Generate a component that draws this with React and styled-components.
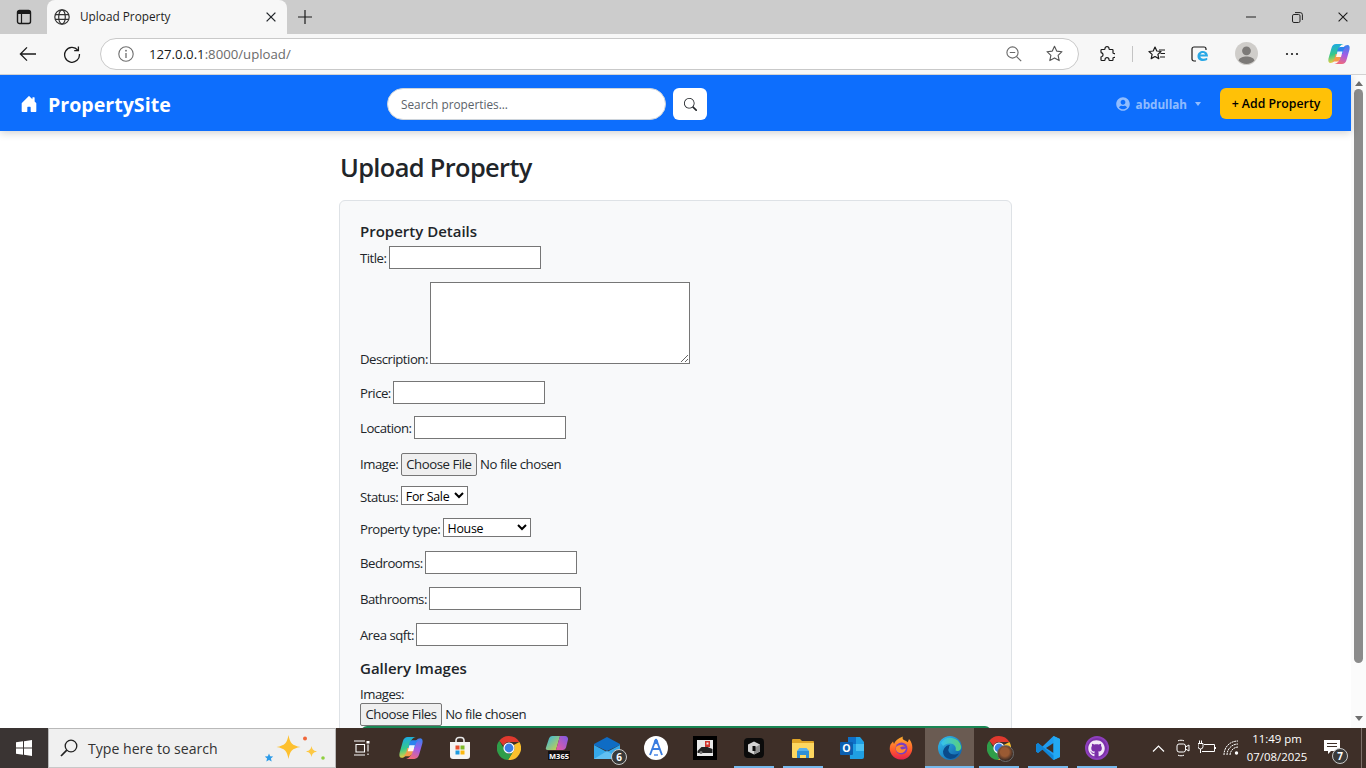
import React from "react";
import styled, { createGlobalStyle } from "styled-components";
import { FaUserCircle, FaGithub } from "react-icons/fa";
import { BsSearch, BsHouseDoorFill } from "react-icons/bs";

const UI = `"Open Sans", "Noto Sans", "Liberation Sans", sans-serif`;

const Global = createGlobalStyle`
  html, body { margin: 0; padding: 0; height: 768px; overflow: hidden; background: #fff; }
  * { box-sizing: border-box; }
  body { font-family: ${UI}; font-size: 13.2px; line-height: 21px; color: #212529; }
`;

const Screen = styled.div`
  width: 1366px;
  height: 768px;
  display: flex;
  flex-direction: column;
  overflow: hidden;
`;

/* browser chrome */
const TabStrip = styled.div`
  height: 34px;
  background: #cccccc;
  display: flex;
  align-items: flex-end;
  flex: none;
`;
const StripSlot = styled.div`
  width: ${(p) => p.$w}px;
  height: 34px;
  display: flex;
  align-items: center;
  justify-content: center;
  flex: none;
  color: #1a1a1a;
`;
const Tab = styled.div`
  width: 240px;
  height: 34px;
  background: #f7f7f7;
  border-radius: 8px 8px 0 0;
  display: flex;
  align-items: center;
  padding: 0 11px 0 7px;
  flex: none;
`;
const TabTitle = styled.span`
  flex: 1;
  margin: 0 0 2px 10px;
  font-size: 11.8px;
  color: #1f1f1f;
`;
const WindowControls = styled.div`
  margin-left: auto;
  display: flex;
  height: 34px;
`;
const Toolbar = styled.div`
  height: 41px;
  background: #f7f7f7;
  border-bottom: 1px solid #d2d2d2;
  display: flex;
  align-items: center;
  padding: 0 0 1px 10px;
  flex: none;
`;
const ToolSlot = styled.div`
  width: 36px;
  height: 32px;
  display: flex;
  align-items: center;
  justify-content: center;
  flex: none;
  margin-left: ${(p) => p.$gap || 0}px;
  color: #1a1a1a;
`;
const UrlBar = styled.div`
  width: 979px;
  height: 32px;
  margin-left: 10px;
  background: #fff;
  border: 1px solid #c9c9c9;
  border-radius: 16px;
  display: flex;
  align-items: center;
  padding: 0 15px 0 17px;
  flex: none;
`;
const UrlText = styled.span`
  margin: 2px 0 0 15px;
  font-size: 13.2px;
  color: #1a1a1a;
  flex: 1;
`;
const UrlRest = styled.span`
  color: #6b6b6b;
`;
const UrlIcons = styled.div`
  display: flex;
  align-items: center;
  gap: 24px;
`;
const ToolDivider = styled.div`
  width: 1px;
  height: 16px;
  background: #c4c4c4;
  margin-left: 7px;
  flex: none;
`;

/* page */
const Main = styled.div`
  flex: 1;
  min-height: 0;
  display: flex;
  overflow: hidden;
`;
const Page = styled.div`
  flex: 1;
  min-width: 0;
  background: #fff;
`;
const Navbar = styled.nav`
  height: 56px;
  background: #0d6efd;
  display: flex;
  align-items: center;
  padding: 2px 19px 0 20px;
  box-shadow: 0 2px 8px rgba(0, 0, 0, 0.18);
  position: relative;
`;
const Brand = styled.div`
  width: 367px;
  display: flex;
  align-items: center;
  gap: 10px;
  color: #fff;
  font-size: 19.6px;
  font-weight: 700;
  flex: none;
`;
const SearchInput = styled.div`
  width: 279px;
  height: 32px;
  background: #fff;
  border: 1px solid #ced4da;
  border-radius: 16px;
  display: flex;
  align-items: center;
  padding: 0 13px;
  font-size: 11.8px;
  color: #5c636a;
  flex: none;
`;
const SearchButton = styled.div`
  width: 34px;
  height: 32px;
  margin-left: 7px;
  background: #fff;
  border-radius: 6px;
  display: flex;
  align-items: center;
  justify-content: center;
  color: #212529;
  flex: none;
`;
const UserMenu = styled.div`
  margin-left: auto;
  display: flex;
  align-items: center;
  color: rgba(255, 255, 255, 0.55);
  font-size: 11.7px;
  font-weight: 700;
  gap: 6px;
`;
const Caret = styled.span`
  width: 0;
  height: 0;
  margin-left: 2px;
  border-top: 4px solid currentColor;
  border-left: 3px solid transparent;
  border-right: 3px solid transparent;
`;
const AddButton = styled.div`
  margin-left: 19px;
  width: 112px;
  height: 31px;
  background: #ffc107;
  border-radius: 6px;
  display: flex;
  align-items: center;
  justify-content: center;
  color: #000;
  font-size: 12.3px;
  font-weight: 600;
  margin-top: -1px;
`;
const Container = styled.div`
  width: 673px;
  margin-left: 339px;
`;
const Title = styled.h1`
  margin: 15px 0 12px 1px;
  font-size: 25.4px;
  line-height: 42px;
  font-weight: 600;
  letter-spacing: -0.65px;
  color: #212529;
`;
const Card = styled.div`
  background: #f8f9fa;
  border: 1px solid #dee2e6;
  border-radius: 6px;
  padding: 18px 20px 0;
  height: 600px;
  letter-spacing: -0.5px;
`;
const SectionTitle = styled.h2`
  margin: 0 0 ${(p) => p.$bottom}px;
  font-size: 15px;
  line-height: 24px;
  font-weight: 600;
  letter-spacing: 0;
  color: #212529;
`;
const Field = styled.div`
  margin-top: ${(p) => p.$before || 0}px;
  margin-bottom: ${(p) => p.$after}px;
  white-space: nowrap;
`;
const Label = styled.label`
  margin-right: 2.5px;
  color: #212529;
`;
const TextInput = styled.input`
  width: 152px;
  height: 23px;
  border: 1px solid #767676;
  border-radius: 0;
  background: #fff;
  padding: 1px 2px;
  vertical-align: 1px;
`;
const TextArea = styled.textarea`
  width: 260px;
  height: 82px;
  border: 1px solid #767676;
  border-radius: 0;
  background: #fff;
  vertical-align: baseline;
  margin: 0;
`;
const FileInput = styled.input`
  font: inherit;
  font-size: 13.2px;
  letter-spacing: -0.45px;
  color: #212529;
  width: 190px;
  &::file-selector-button {
    font: inherit;
    letter-spacing: -0.45px;
    height: 23px;
    padding: 0 4.5px;
    margin-right: 3px;
    border: 1px solid #767676;
    border-radius: 2px;
    background: #efefef;
    color: #212529;
  }
`;
const Select = styled.select`
  font: inherit;
  font-size: 12.4px;
  letter-spacing: -0.3px;
  height: 19px;
  width: ${(p) => p.$w}px;
  background: #fff;
  color: #000;
  border: 1px solid #767676;
  border-radius: 0;
  padding: 0;
  vertical-align: 1px;
`;
const SubmitPeek = styled.div`
  height: 30px;
  width: 630px;
  margin-left: 1px;
  background: #198754;
  border-radius: 6px;
`;
const Scrollbar = styled.div`
  width: 15px;
  background: #fbfbfb;
  display: flex;
  flex-direction: column;
  align-items: center;
  justify-content: space-between;
  padding: 6px 0 7px;
  flex: none;
`;
const Thumb = styled.div`
  width: 9px;
  height: 574px;
  margin-top: 3px;
  background: #8b8b8b;
  border-radius: 5px;
`;
const ArrowUp = styled.span`
  border-bottom: 5px solid #6e6e6e;
  border-left: 4.5px solid transparent;
  border-right: 4.5px solid transparent;
`;
const ArrowDown = styled.span`
  margin-top: auto;
  border-top: 5px solid #6e6e6e;
  border-left: 4.5px solid transparent;
  border-right: 4.5px solid transparent;
`;

/* windows taskbar */
const Taskbar = styled.div`
  height: 40px;
  background: #3e2f28;
  display: flex;
  flex: none;
  position: relative;
  color: #fff;
`;
const StartButton = styled.div`
  width: 48px;
  background: #3a3433;
  display: flex;
  align-items: center;
  justify-content: center;
  flex: none;
`;
const SearchBox = styled.div`
  width: 288px;
  background: #f0f0f0;
  border: 1px solid #b9b9b9;
  border-bottom-color: #c8c8c8;
  display: flex;
  align-items: center;
  padding: 0 8px 0 11px;
  color: #2b2b2b;
  flex: none;
`;
const SearchLabel = styled.span`
  margin-left: 10px;
  font-size: 14.1px;
  flex: 1;
  color: #333;
`;
const TaskItems = styled.div`
  display: flex;
  padding-left: 1px;
  flex: none;
`;
const TaskItem = styled.div`
  width: 49px;
  height: 40px;
  display: flex;
  align-items: center;
  justify-content: center;
  position: relative;
  flex: none;
  background: ${(p) => (p.$active ? "#6a5b52" : "transparent")};
  &::after {
    content: "";
    display: ${(p) => (p.$running ? "block" : "none")};
    position: absolute;
    bottom: 0;
    left: ${(p) => (p.$active ? 0 : 5)}px;
    right: ${(p) => (p.$active ? 0 : 4)}px;
    height: 2px;
    background: #76b9ed;
  }
`;
const CountBadge = styled.span`
  position: absolute;
  right: ${(p) => p.$right}px;
  bottom: ${(p) => p.$bottom}px;
  width: 16px;
  height: 16px;
  border-radius: 50%;
  border: 1px solid #c9c9c9;
  background: #3a3a3a;
  color: #fff;
  font-size: 10px;
  font-weight: 700;
  line-height: 14px;
  text-align: center;
`;
const Tray = styled.div`
  margin-left: auto;
  display: flex;
  align-items: center;
  flex: none;
`;
const TraySlot = styled.div`
  width: 24.5px;
  height: 40px;
  display: flex;
  align-items: center;
  justify-content: center;
`;
const Clock = styled.div`
  width: 66px;
  text-align: center;
  font-size: 11.4px;
  line-height: 18px;
  color: #fff;
`;
const Notify = styled.div`
  width: 44px;
  height: 40px;
  margin-left: 1px;
  display: flex;
  align-items: center;
  justify-content: center;
  position: relative;
`;
const ShowDesktop = styled.div`
  width: 5px;
  height: 40px;
  margin-left: 6px;
  border-left: 1px solid #7d706a;
`;
const Tiny = styled.text`
  font-family: ${UI};
`;

/* icons */
const Svg = ({ s = 16, vb = "0 0 16 16", children }) => (
  <svg width={s} height={s} viewBox={vb} fill="none" stroke="none">{children}</svg>
);
const line = { stroke: "currentColor", strokeWidth: 1.2, fill: "none" };

const SidebarIcon = () => (
  <Svg><rect x="1.5" y="1.5" width="13" height="13" rx="2" {...line} strokeWidth="1.4" /><path d="M5.5 5v9" {...line} /><path d="M2 2h12v3H2z" fill="#1a1a1a" /></Svg>
);
const GlobeIcon = () => (
  <Svg><g {...line} stroke="#333"><circle cx="8" cy="8" r="7.2" /><ellipse cx="8" cy="8" rx="3.3" ry="7.2" /><path d="M1 5.6h14M1 10.4h14" /></g></Svg>
);
const CloseIcon = ({ s = 10, w = 1.3 }) => (
  <Svg s={s} vb="0 0 10 10"><path d="M.6.6l8.8 8.8M9.4.6L.6 9.4" stroke="currentColor" strokeWidth={w} /></Svg>
);
const PlusIcon = () => (
  <Svg><path d="M8 1v14M1 8h14" stroke="currentColor" strokeWidth="1.2" /></Svg>
);
const MinIcon = () => <Svg s={10} vb="0 0 10 10"><path d="M0 5h10" stroke="#222" strokeWidth="1" /></Svg>;
const RestoreIcon = () => (
  <Svg s={11} vb="0 0 11 11"><rect x=".5" y="2.5" width="7.5" height="8" rx="1.4" stroke="#222" /><path d="M3 .6h5.2a2.2 2.2 0 012.2 2.2V8" stroke="#222" /></Svg>
);
const BackIcon = () => (
  <Svg s={18} vb="0 0 18 18"><path d="M17 9H1.5M8 2.4L1.4 9 8 15.6" stroke="#1a1a1a" strokeWidth="1.3" /></Svg>
);
const ReloadIcon = () => (
  <Svg s={18} vb="0 0 18 18"><path d="M14.8 5.2A7.4 7.4 0 1016.4 9" stroke="#1a1a1a" strokeWidth="1.3" /><path d="M15.4 1.4v4.2h-4.2" stroke="#1a1a1a" strokeWidth="1.3" /></Svg>
);
const InfoIcon = () => (
  <Svg><circle cx="8" cy="8" r="7.2" stroke="#6e6e6e" strokeWidth="1.1" /><path d="M8 7v5" stroke="#6e6e6e" strokeWidth="1.3" /><circle cx="8" cy="4.7" r=".9" fill="#6e6e6e" /></Svg>
);
const ZoomOutIcon = () => (
  <Svg><circle cx="6.5" cy="6.5" r="5.6" stroke="#6a6a6a" strokeWidth="1.1" /><path d="M3.8 6.5h5.4M10.6 10.6L15.2 15.2" stroke="#6a6a6a" strokeWidth="1.2" /></Svg>
);
const StarIcon = () => (
  <Svg s={17} vb="0 0 17 17"><path d="M8.5 1.2l2.2 4.9 5.3.6-3.9 3.6 1.1 5.3-4.7-2.7-4.7 2.7 1.1-5.3L1 6.7l5.3-.6z" stroke="#555" strokeWidth="1.1" strokeLinejoin="round" /></Svg>
);
const PuzzleIcon = () => (
  <Svg s={16} vb="0 0 16 16"><path d="M6 2.600a2 2 0 014 0c0 .5.3.9.8.9h2.400c.5 0 .8.4.8.8v2.400c0 .5.4.8.9.8a2 2 0 010 4c-.5 0-.9.3-.9.8v1.400c0 .5-.3.8-.8.8h-2.400c-.5 0-.8-.3-.8-.8a2 2 0 00-4 0c0 .5-.3.8-.8.8H2.800c-.5 0-.8-.3-.8-.8v-2.400c0-.5.4-.8.9-.8a2 2 0 000-3.600c-.5 0-.9-.3-.9-.8V4.300c0-.4.3-.8.8-.8h2.400c.5 0 .8-.4.8-.9z" stroke="#1a1a1a" strokeWidth="1.2" /></Svg>
);
const FavIcon = () => (
  <Svg s={18} vb="0 0 18 18"><path d="M7 2l1.800 4 4.200.5-3.100 2.900.9 4.200L7 11.500l-3.800 2.100.9-4.200L1 6.500 5.200 6z" stroke="#1a1a1a" strokeWidth="1.2" strokeLinejoin="round" /><path d="M11 5h6M12.500 8.500H17M12 12h5" stroke="#1a1a1a" strokeWidth="1.1" /></Svg>
);
const IeIcon = () => (
  <Svg s={18} vb="0 0 18 18">
    <path d="M5 16H3a2 2 0 01-2-2V4a2 2 0 012-2h10a2 2 0 012 2v1" stroke="#1a1a1a" strokeWidth="1.2" />
    <path d="M17 11.500H9.300c.2 2 2.900 3 6.900 1.200v2.400c-4.700 2-9.700.9-9.700-3.800 0-4.500 5.200-6.500 8.400-4.300 1.500 1 2 2.600 2.100 4.500zM9.400 9.500h4.700c-.2-2-4.300-2.200-4.700 0z" fill="#29a8e6" />
  </Svg>
);
const ProfileIcon = () => (
  <Svg s={23} vb="0 0 23 23">
    <circle cx="11.500" cy="11.500" r="11.500" fill="#cfcdca" />
    <circle cx="11.500" cy="8.800" r="4.400" fill="#7c7a78" />
    <path d="M3.500 18.500c1-3 4.500-4 8-4s7 1 8 4a11 11 0 01-16 0z" fill="#7c7a78" />
  </Svg>
);
const DotsIcon = () => (
  <Svg s={14} vb="0 0 14 14"><g fill="#1a1a1a"><circle cx="2" cy="7" r="1.100" /><circle cx="7" cy="7" r="1.100" /><circle cx="12" cy="7" r="1.100" /></g></Svg>
);
const CopilotIcon = ({ id, s = 22 }) => (
  <svg width={s} height={s} viewBox="0 0 22 22">
    <defs>
      <linearGradient id={`${id}a`} x1="0.2" y1="0" x2="0.4" y2="1"><stop offset="0" stopColor="#1aa7ec" /><stop offset=".55" stopColor="#35c98a" /><stop offset="1" stopColor="#f7cf3a" /></linearGradient>
      <linearGradient id={`${id}b`} x1="0.7" y1="0" x2="0.4" y2="1"><stop offset="0" stopColor="#3f7ff0" /><stop offset=".5" stopColor="#a35ce6" /><stop offset="1" stopColor="#f26a7a" /></linearGradient>
    </defs>
    <path d="M8 1h7.500c-3 .5-4.500 3-5.500 6.500L8 14c-.7 3-2.500 6-5.500 6C.5 20 0 18 .5 15.500L3.500 5C4.200 2.600 5.800 1 8 1z" fill={`url(#${id}a)`} />
    <path d="M14 21H6.500c3-.5 4.500-3 5.500-6.500L14 8c.7-3 2.500-6 5.500-6 2 0 2.500 2 2 4.500L18.500 17c-.7 2.400-2.300 4-4.500 4z" fill={`url(#${id}b)`} />
    <path d="M12 4h6c-1.500 1-2.500 2.500-3 4.500l-.6 2.500H8.500l1-4C10 5 11 4 12 4z" fill="#2a83ee" />
    <path d="M7.600 11h5.900l-1 3.500C12 17 10.800 18 9.500 18.500H4c1.500-1 2.600-2.500 3-4.500z" fill="#f59a4a" />
    <path d="M9.500 8.500h5l-1.500 5.500h-5z" fill="#fff" opacity=".92" />
  </svg>
);
const WinLogo = () => (
  <Svg s={16} vb="0 0 16 16"><path d="M0 2.300l7-1v6.200H0zM8 1.200L16 0v7.500H8zM0 8.500h7v6.200l-7-1zM8 8.500h8V16l-8-1.200z" fill="#fff" /></Svg>
);
const LoupeIcon = () => (
  <Svg s={18} vb="0 0 18 18"><circle cx="11" cy="7" r="5.800" stroke="#222" strokeWidth="1.300" /><path d="M6.800 11.200L1 17" stroke="#222" strokeWidth="1.700" /></Svg>
);
const Sparkles = () => (
  <svg width="62" height="30" viewBox="0 0 62 30">
    <path d="M23.500 2c1.500 8 3.500 10.500 12 12-8.500 1.500-10.500 4-12 12-1.500-8-3.500-10.500-12-12 8.500-1.500 10.500-4 12-12z" fill="#fdc02f" />
    <path d="M46.500 13c.6 3 1.500 4.500 5.500 5.500-4 1-4.900 2.500-5.500 5.500-.6-3-1.500-4.500-5.500-5.500 4-1 4.900-2.500 5.500-5.500z" fill="#fdc844" />
    <path d="M4 20.500l1.200 2.800 3 .3-2.300 2 .8 3L4 27l-2.700 1.600.8-3-2.300-2 3-.3z" fill="#2d9be8" />
    <circle cx="40" cy="5.500" r="2" fill="#f0673a" />
    <circle cx="58" cy="25" r="1.800" fill="#8fcf3f" />
  </svg>
);
const TaskViewIcon = () => (
  <Svg s={16} vb="0 0 16 16"><path d="M2 4.500h8.500v7.500H2zM0 1h11M0 15h11M14 4.500v7M14 13.500V15" stroke="#fff" strokeWidth="1.100" /><rect x="12.500" y="1" width="3" height="2.500" fill="#fff" /></Svg>
);
const StoreIcon = () => (
  <Svg s={24} vb="0 0 24 24">
    <path d="M8 6V4.500a3 3 0 013-3h2a3 3 0 013 3V6" stroke="#e8e8e8" strokeWidth="1.600" />
    <path d="M2 6h20v14a3 3 0 01-3 3H5a3 3 0 01-3-3z" fill="#f4f4f4" />
    <rect x="7.500" y="9.500" width="4" height="4" fill="#e8502f" /><rect x="12.500" y="9.500" width="4" height="4" fill="#7fba28" />
    <rect x="7.500" y="14.500" width="4" height="4" fill="#1d9be0" /><rect x="12.500" y="14.500" width="4" height="4" fill="#fbb80f" />
  </Svg>
);
const ChromeIcon = ({ s = 24 }) => (
  <Svg s={s} vb="0 0 24 24">
    <path d="M12 0a12 12 0 0110.400 6H12a6 6 0 00-5.600 3.800L2.300 4.700A12 12 0 0112 0z" fill="#e0392e" />
    <path d="M22.400 6A12 12 0 0111 24l5.200-8.400A6 6 0 0016.800 9z" fill="#fbc02d" />
    <path d="M11 24A12 12 0 012.300 4.700L7 12.500a6 6 0 006 5.500l3.200-2.400z" fill="#2f9e49" />
    <circle cx="12" cy="12" r="5.600" fill="#fff" /><circle cx="12" cy="12" r="4.400" fill="#3a7ee8" />
  </Svg>
);
const ProfileChrome = styled.div`
  position: relative;
  width: 24px;
  height: 24px;
  &::after {
    content: "";
    position: absolute;
    right: -3px;
    bottom: -2px;
    width: 15px;
    height: 15px;
    border-radius: 50%;
    background: radial-gradient(circle at 45% 40%, #9a5a33 0 35%, #3a2a24 70%);
    border: 1px solid #6b6b6b;
  }
`;
const M365Icon = () => (
  <svg width="26" height="26" viewBox="0 0 26 26">
    <defs>
      <linearGradient id="m1" x1="0" y1="0" x2="1" y2="1"><stop offset="0" stopColor="#2fb5e6" /><stop offset="1" stopColor="#d8d23c" /></linearGradient>
      <linearGradient id="m2" x1="1" y1="0" x2="0" y2="1"><stop offset="0" stopColor="#7a5be8" /><stop offset="1" stopColor="#ec5a9c" /></linearGradient>
    </defs>
    <path d="M7 1h8l-4 14H2.500C1 15 .4 14 1 12.500L4 3.500A3.500 3.500 0 017 1z" fill="url(#m1)" />
    <path d="M15 1h5a3 3 0 013 3.500l-2 8A3.500 3.500 0 0118 15h-7z" fill="url(#m2)" />
    <rect x="3" y="16" width="22" height="9" fill="#111" />
    <Tiny x="14" y="23.500" fontSize="7.500" fontWeight="700" fill="#fff" textAnchor="middle">M365</Tiny>
  </svg>
);
const MailIcon = () => (
  <Svg s={26} vb="0 0 26 26">
    <path d="M0 9l13-7 13 7v1L13 16 0 10z" fill="#0f6cc4" />
    <path d="M0 10l13 7 13-7v14H0z" fill="#35a8ea" />
    <path d="M0 24l13-8 13 8z" fill="#61c0f2" />
  </Svg>
);
const StudioIcon = () => (
  <Svg s={24} vb="0 0 24 24">
    <circle cx="12" cy="12" r="12" fill="#fff" />
    <path d="M12 3L6 19M12 3l6 16M7.500 13h9" stroke="#3a7de0" strokeWidth="1.900" />
    <circle cx="12" cy="6" r="2.200" fill="#3a7de0" />
    <path d="M10 19h4" stroke="#7aa7ee" strokeWidth="2" />
  </Svg>
);
const GameIcon = () => (
  <Svg s={24} vb="0 0 24 24">
    <rect width="24" height="24" fill="#000" />
    <rect x="4" y="4" width="16" height="16" fill="#e9e9e9" />
    <path d="M4.500 15l4-4h6l5 2v4h-15z" fill="#222" />
    <path d="M12 5h5v6h-5z" fill="#d0342c" /><rect x="13.500" y="6.500" width="2" height="2" fill="#eee" />
    <circle cx="8" cy="16.500" r="1.500" fill="#777" />
  </Svg>
);
const CubeIcon = () => (
  <Svg s={20} vb="0 0 20 20">
    <rect width="20" height="20" rx="4" fill="#0b0b0b" />
    <path d="M10 3.500l6 3v7l-6 3-6-3v-7z" fill="#d4d4d4" />
    <path d="M10 10l6-3.500v7l-6 3z" fill="#8f8f8f" /><path d="M8.500 8h3v5h-3z" fill="#0b0b0b" />
  </Svg>
);
const FolderIcon = () => (
  <Svg s={22} vb="0 0 22 22">
    <path d="M0 3a1 1 0 011-1h7l2 2h11a1 1 0 011 1v3H0z" fill="#e0a526" />
    <path d="M0 6h22v14a1 1 0 01-1 1H1a1 1 0 01-1-1z" fill="#fdd760" />
    <path d="M5 14h12v7h-3v-3H8v3H5z" fill="#2f8fd6" />
    <path d="M7.500 11h7l2.500 3H5z" fill="#58b0ea" />
  </Svg>
);
const OutlookIcon = () => (
  <Svg s={24} vb="0 0 24 24">
    <path d="M9 1h11l4 5v15a2 2 0 01-2 2H10z" fill="#1f9fe3" />
    <path d="M8 1h8v7H8z" fill="#0f70c8" /><path d="M16 8h8v7h-8z" fill="#49c0f2" />
    <rect y="6" width="13" height="13" rx="1" fill="#0c5fb0" />
    <Tiny x="6.500" y="16" fontSize="10.500" fontWeight="700" fill="#fff" textAnchor="middle">O</Tiny>
  </Svg>
);
const FirefoxIcon = () => (
  <svg width="24" height="24" viewBox="0 0 24 24">
    <defs><linearGradient id="ff" x1="0" y1="0" x2="0" y2="1"><stop offset="0" stopColor="#ffb02e" /><stop offset=".6" stopColor="#ff5a2c" /><stop offset="1" stopColor="#e6204e" /></linearGradient></defs>
    <path d="M12 23.500A11 11 0 011.500 8.500L4 5.500 5 8c1-3 4-6 9-7.500-1 2 0 3 2 4 1 .5 2 1 2.800 1.800L20 3c2.800 3 3.500 6.500 3.300 9A11.200 11.200 0 0112 23.500z" fill="url(#ff)" />
    <circle cx="12.500" cy="12.500" r="6" fill="#7b3fbe" />
    <path d="M7 11c2-2.500 7-3 10 0-2-.8-5-.6-6 1 1 .3 1 1.500 2 1.500 2 0 3-1 4-1-.5 3-3 5-6 4.500-3-.5-4.800-3-4-6z" fill="#ff8a2e" />
  </svg>
);
const EdgeIcon = () => (
  <svg width="24" height="24" viewBox="0 0 24 24">
    <defs>
      <linearGradient id="eg" x1="0" y1="0" x2="1" y2="1"><stop offset="0" stopColor="#35c1f1" /><stop offset="1" stopColor="#0c59a4" /></linearGradient>
      <linearGradient id="eg2" x1="0" y1="0" x2="1" y2="0"><stop offset="0" stopColor="#35c1f1" /><stop offset="1" stopColor="#5ad07a" /></linearGradient>
    </defs>
    <circle cx="12" cy="12" r="12" fill="url(#eg)" />
    <path d="M3 7a11 11 0 0120 3c1 4-3 6-5.500 4.500C19 11 16 7.500 12 7.500 8 7.500 6 9 5 10 4.500 9 3.500 8 3 7z" fill="url(#eg2)" />
    <path d="M11 12c-2 3 1 7 6 6.500 2 0 3.500-1 4-2-1.500 5-7 7.500-11 6-3-1-5-3.500-5-7 1-4 4-7 7-6.500-1 1-1 2-1 3z" fill="#0a4a8a" />
  </svg>
);
const VsCodeIcon = () => (
  <Svg s={24} vb="0 0 24 24">
    <path d="M17.500 0L24 3v18l-6.500 3-11-10.500L2 17l-2-1.500v-7L2 7l4.500 3.500z" fill="#1f9cf0" />
    <path d="M17.500 7L10 12l7.500 5z" fill="#3e2f28" />
    <path d="M17.500 0L24 3v18l-6.500 3z" fill="#23a9f2" />
    <path d="M0 8.500L2 7l15.500 12.500V24L6.500 13.500 2 17l-2-1.500z" fill="#0d7fd0" opacity=".8" />
  </Svg>
);
const GithubBadge = styled.div`
  width: 24px;
  height: 24px;
  border-radius: 50%;
  background: #7b2fa8;
  border: 2px solid #8d3fbb;
  display: flex;
  align-items: center;
  justify-content: center;
  color: #f3e9f8;
`;
const Chevron = () => (
  <Svg s={13} vb="0 0 13 13"><path d="M1 9.500L6.500 4 12 9.500" stroke="#fff" strokeWidth="1.200" /></Svg>
);
const CamIcon = () => (
  <Svg s={18} vb="0 0 18 18"><rect x="3" y="5" width="8.500" height="8" rx="2" stroke="#fff" /><path d="M11.500 8l3.500-2v6l-3.500-2z" stroke="#fff" /><path d="M4 1.800c2-.8 4-.8 6 0M4 16.200c2 .8 4 .8 6 0" stroke="#fff" /></Svg>
);
const BatteryIcon = () => (
  <Svg s={18} vb="0 0 18 18"><path d="M6 5.500h10.500v7H4" stroke="#fff" /><path d="M17.500 8v2" stroke="#fff" /><path d="M0 4.500h5v3a2.500 2.500 0 01-5 0zM1.500 1.500v3M3.500 1.500v3M2.500 10v4" stroke="#fff" strokeWidth="1" fill="#3e2f28" /></Svg>
);
const WifiIcon = () => (
  <Svg s={18} vb="0 0 18 18"><path d="M1 16C1 8 7 2 15 2M4 16C4 10 9 5 15 5M7 16c0-4 4-8 8-8" stroke="#fff" strokeDasharray="2 .6" /><circle cx="13.500" cy="14" r="1.700" fill="#fff" /></Svg>
);
const NotifyIcon = () => (
  <Svg s={18} vb="0 0 18 18"><path d="M0 1h16v11H7l-3 3v-3H0z" fill="#fff" /><path d="M3 4.500h10M3 7.500h10" stroke="#3e2f28" /></Svg>
);

export default function App() {
  return (
    <Screen>
      <Global />
      <TabStrip>
        <StripSlot $w={47}><SidebarIcon /></StripSlot>
        <Tab>
          <GlobeIcon />
          <TabTitle>Upload Property</TabTitle>
          <CloseIcon />
        </Tab>
        <StripSlot $w={36}><PlusIcon /></StripSlot>
        <WindowControls>
          <StripSlot $w={46}><MinIcon /></StripSlot>
          <StripSlot $w={46}><RestoreIcon /></StripSlot>
          <StripSlot $w={46}><CloseIcon s={10} w={1.1} /></StripSlot>
        </WindowControls>
      </TabStrip>
      <Toolbar>
        <ToolSlot><BackIcon /></ToolSlot>
        <ToolSlot $gap={8}><ReloadIcon /></ToolSlot>
        <UrlBar>
          <InfoIcon />
          <UrlText>127.0.0.1<UrlRest>:8000/upload/</UrlRest></UrlText>
          <UrlIcons><ZoomOutIcon /><StarIcon /></UrlIcons>
        </UrlBar>
        <ToolSlot $gap={10}><PuzzleIcon /></ToolSlot>
        <ToolDivider />
        <ToolSlot $gap={6}><FavIcon /></ToolSlot>
        <ToolSlot $gap={7}><IeIcon /></ToolSlot>
        <ToolSlot $gap={10}><ProfileIcon /></ToolSlot>
        <ToolSlot $gap={10}><DotsIcon /></ToolSlot>
        <ToolSlot $gap={11}><CopilotIcon id="cp" /></ToolSlot>
      </Toolbar>
      <Main>
        <Page>
          <Navbar>
            <Brand><BsHouseDoorFill size={18} />PropertySite</Brand>
            <SearchInput>Search properties...</SearchInput>
            <SearchButton><BsSearch size={13} /></SearchButton>
            <UserMenu><FaUserCircle size={14} />abdullah<Caret /></UserMenu>
            <AddButton>+ Add Property</AddButton>
          </Navbar>
          <Container>
            <Title>Upload Property</Title>
            <Card>
              <SectionTitle $bottom={3}>Property Details</SectionTitle>
              <Field $after={13}><Label>Title:</Label><TextInput /></Field>
              <Field $after={11}><Label>Description:</Label><TextArea /></Field>
              <Field $after={12}><Label>Price:</Label><TextInput /></Field>
              <Field $after={14}><Label>Location:</Label><TextInput /></Field>
              <Field $after={10}><Label>Image:</Label><FileInput type="file" /></Field>
              <Field $after={10}>
                <Label>Status:</Label>
                <Select $w={67}><option>For Sale</option></Select>
              </Field>
              <Field $after={11}>
                <Label>Property type:</Label>
                <Select $w={88}><option>House</option></Select>
              </Field>
              <Field $after={13}><Label>Bedrooms:</Label><TextInput /></Field>
              <Field $after={13}><Label>Bathrooms:</Label><TextInput /></Field>
              <Field $after={10}><Label>Area sqft:</Label><TextInput /></Field>
              <SectionTitle $bottom={4}>Gallery Images</SectionTitle>
              <Label>Images:</Label>
              <Field $before={-2} $after={0}><FileInput type="file" multiple /></Field>
              <SubmitPeek />
            </Card>
          </Container>
        </Page>
        <Scrollbar>
          <ArrowUp />
          <Thumb />
          <ArrowDown />
        </Scrollbar>
      </Main>
      <Taskbar>
        <StartButton><WinLogo /></StartButton>
        <SearchBox>
          <LoupeIcon />
          <SearchLabel>Type here to search</SearchLabel>
          <Sparkles />
        </SearchBox>
        <TaskItems>
          <TaskItem><TaskViewIcon /></TaskItem>
          <TaskItem><CopilotIcon id="tb" s={24} /></TaskItem>
          <TaskItem><StoreIcon /></TaskItem>
          <TaskItem><ChromeIcon /></TaskItem>
          <TaskItem><M365Icon /></TaskItem>
          <TaskItem><MailIcon /><CountBadge $right={4} $bottom={3}>6</CountBadge></TaskItem>
          <TaskItem><StudioIcon /></TaskItem>
          <TaskItem><GameIcon /></TaskItem>
          <TaskItem $running><CubeIcon /></TaskItem>
          <TaskItem $running><FolderIcon /></TaskItem>
          <TaskItem><OutlookIcon /></TaskItem>
          <TaskItem><FirefoxIcon /></TaskItem>
          <TaskItem $running $active><EdgeIcon /></TaskItem>
          <TaskItem $running><ProfileChrome><ChromeIcon /></ProfileChrome></TaskItem>
          <TaskItem $running><VsCodeIcon /></TaskItem>
          <TaskItem $running><GithubBadge><FaGithub size={17} /></GithubBadge></TaskItem>
        </TaskItems>
        <Tray>
          <TraySlot><Chevron /></TraySlot>
          <TraySlot><CamIcon /></TraySlot>
          <TraySlot><BatteryIcon /></TraySlot>
          <TraySlot><WifiIcon /></TraySlot>
          <Clock>11:49 pm<br />07/08/2025</Clock>
          <Notify><NotifyIcon /><CountBadge $right={7} $bottom={4}>7</CountBadge></Notify>
          <ShowDesktop />
        </Tray>
      </Taskbar>
    </Screen>
  );
}
